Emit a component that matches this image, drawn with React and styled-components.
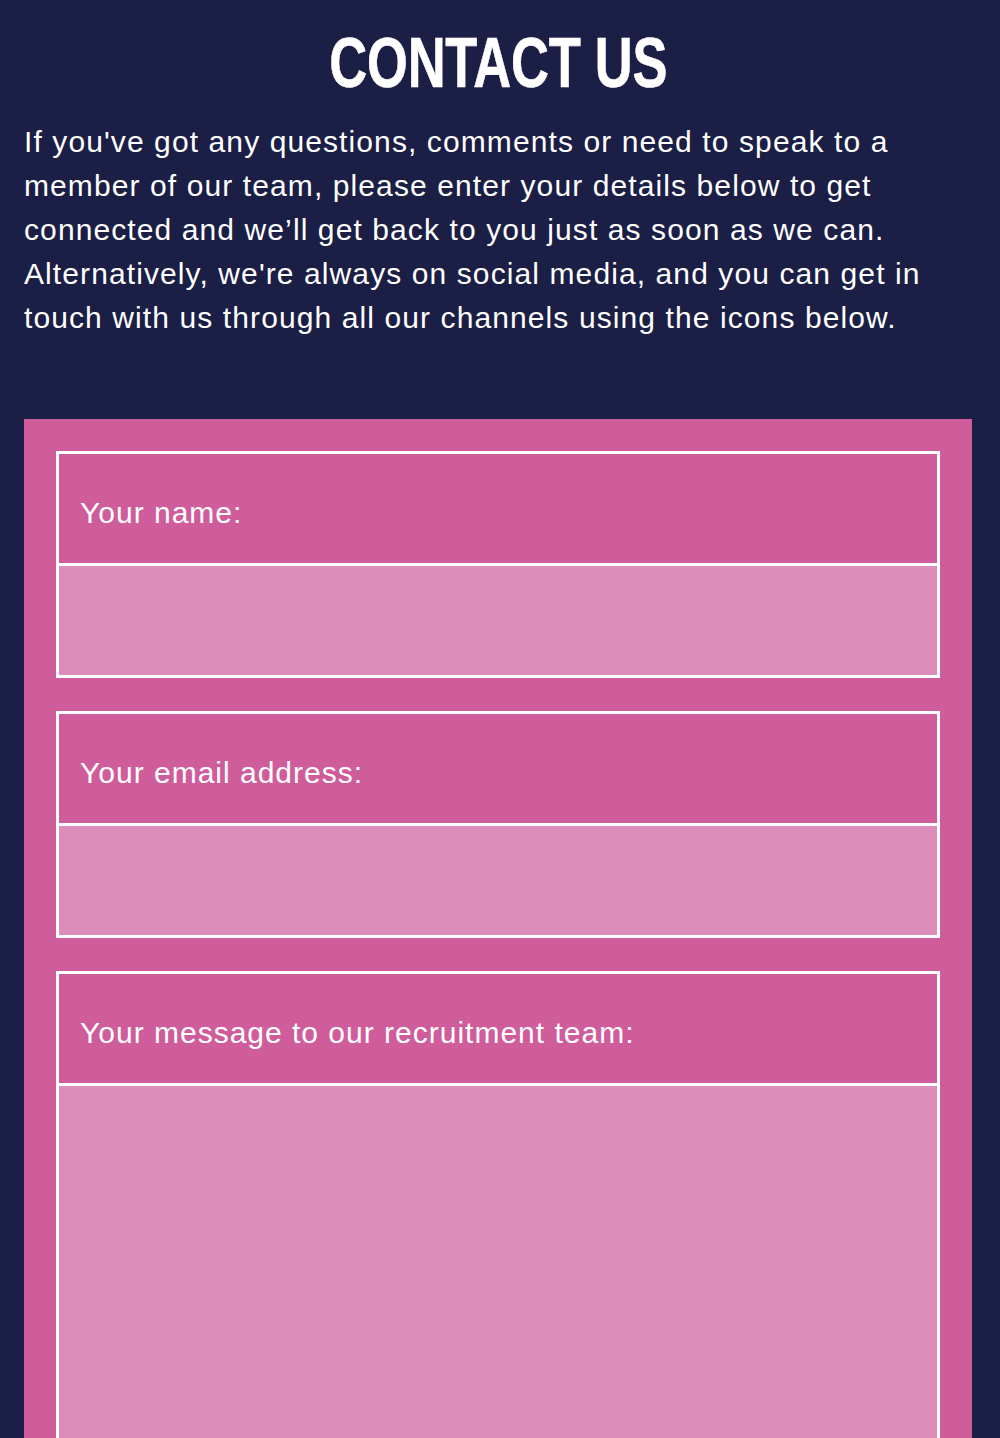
import styled, { createGlobalStyle } from "styled-components";

const GlobalStyle = createGlobalStyle`
    body {
        margin: 0;
        background: #1b1e45;
        font-family: "Liberation Sans", Arial, sans-serif;
        color: #fff;
    }
`;

const Page = styled.main`
    padding: 0 28px 40px 24px;
`;

const Title = styled.h1`
    margin: 0;
    padding-top: 26px;
    text-align: center;
    font-family: "Liberation Sans", Arial, sans-serif;
    font-weight: 700;
    font-size: 70px;
    line-height: 74px;

    span {
        display: inline-block;
        transform: scaleX(0.75);
        letter-spacing: -0.3px;
        -webkit-text-stroke: 0.6px #fff;
    }
`;

const Intro = styled.p`
    margin: 20px 0 0;
    font-size: 30px;
    line-height: 44px;
    letter-spacing: 1.1px;
`;

const FormPanel = styled.form`
    margin-top: 79px;
    background: #cf5c9b;
    padding: 32px;
    display: flex;
    flex-direction: column;
    gap: 33px;
`;

const Field = styled.label`
    display: flex;
    flex-direction: column;
    border: 3px solid #fff;
`;

const FieldLabel = styled.span`
    height: 112px;
    display: flex;
    align-items: center;
    padding: 8px 21px 0;
    box-sizing: border-box;
    font-size: 30px;
    letter-spacing: 1px;
    border-bottom: 3px solid #fff;
`;

const Input = styled.input`
    height: 109px;
    border: 0;
    margin: 0;
    padding: 0 22px;
    background: #dc8db9;
    font: inherit;
    font-size: 30px;
    color: #fff;
    outline: none;
`;

const TextArea = styled.textarea`
    height: 420px;
    border: 0;
    margin: 0;
    padding: 22px;
    background: #dc8db9;
    font: inherit;
    font-size: 30px;
    color: #fff;
    resize: none;
    outline: none;
`;

export default function App() {
    return (
        <>
            <GlobalStyle />
            <Page>
                <Title>
                    <span>CONTACT US</span>
                </Title>
                <Intro>
                    If you've got any questions, comments or need to speak to a member of our team, please enter your
                    details below to get connected and we’ll get back to you just as soon as we can. Alternatively,
                    we're always on social media, and you can get in touch with us through all our channels using the
                    icons below.
                </Intro>
                <FormPanel>
                    <Field>
                        <FieldLabel>Your name:</FieldLabel>
                        <Input type="text" />
                    </Field>
                    <Field>
                        <FieldLabel>Your email address:</FieldLabel>
                        <Input type="email" />
                    </Field>
                    <Field>
                        <FieldLabel>Your message to our recruitment team:</FieldLabel>
                        <TextArea />
                    </Field>
                </FormPanel>
            </Page>
        </>
    );
}
